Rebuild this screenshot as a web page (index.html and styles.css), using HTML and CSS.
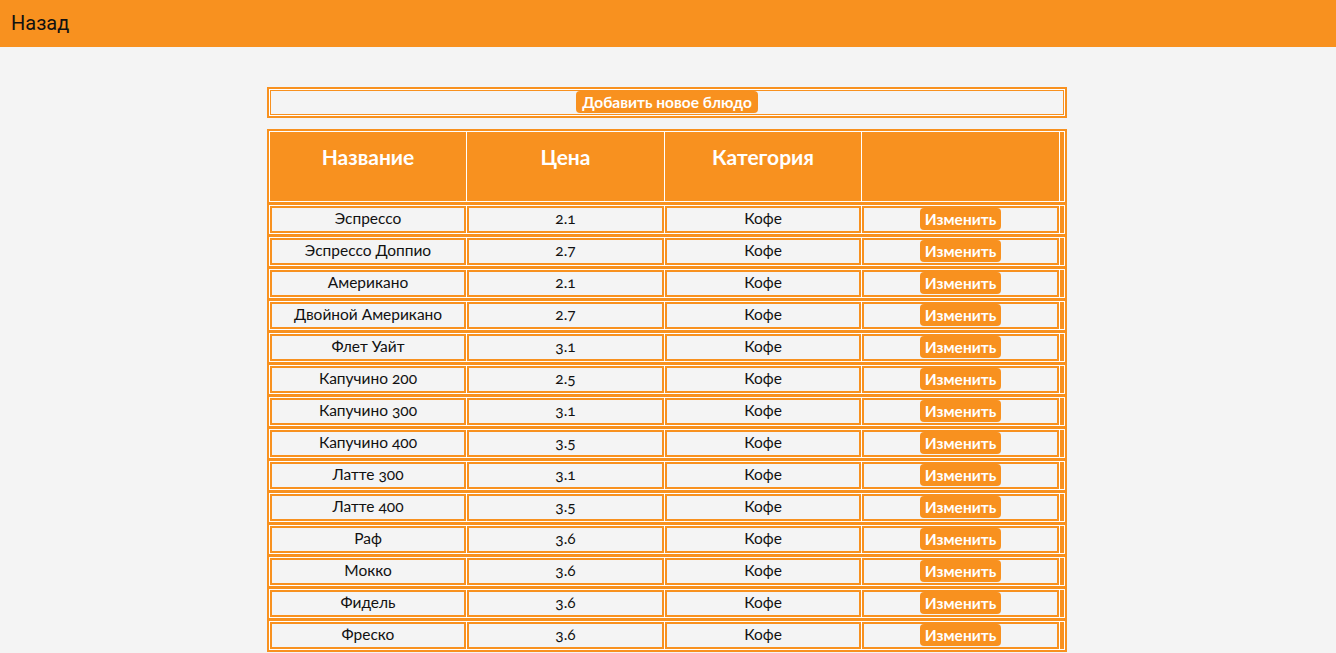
FILE: index.html
```html
<!DOCTYPE html>
<html lang="ru">
<head>
<meta charset="utf-8">
<title>Меню</title>
<link rel="stylesheet" href="styles.css">
</head>
<body>
<header class="topbar"><a class="back">Назад</a></header>
<main class="content">
  <div class="addbox">
    <div class="addcell"><button class="btn btn-add">Добавить новое блюдо</button></div>
  </div>
  <div class="table">
    <div class="row head">
      <div class="cell">Название</div>
      <div class="cell">Цена</div>
      <div class="cell">Категория</div>
      <div class="cell"></div>
      <div class="cell tail"></div>
    </div>
    <div class="row"><div class="cell">Эспрессо</div><div class="cell">2.1</div><div class="cell">Кофе</div><div class="cell"><button class="btn">Изменить</button></div><div class="cell tail"></div></div>
    <div class="row"><div class="cell">Эспрессо Доппио</div><div class="cell">2.7</div><div class="cell">Кофе</div><div class="cell"><button class="btn">Изменить</button></div><div class="cell tail"></div></div>
    <div class="row"><div class="cell">Американо</div><div class="cell">2.1</div><div class="cell">Кофе</div><div class="cell"><button class="btn">Изменить</button></div><div class="cell tail"></div></div>
    <div class="row"><div class="cell">Двойной Американо</div><div class="cell">2.7</div><div class="cell">Кофе</div><div class="cell"><button class="btn">Изменить</button></div><div class="cell tail"></div></div>
    <div class="row"><div class="cell">Флет Уайт</div><div class="cell">3.1</div><div class="cell">Кофе</div><div class="cell"><button class="btn">Изменить</button></div><div class="cell tail"></div></div>
    <div class="row"><div class="cell">Капучино 200</div><div class="cell">2.5</div><div class="cell">Кофе</div><div class="cell"><button class="btn">Изменить</button></div><div class="cell tail"></div></div>
    <div class="row"><div class="cell">Капучино 300</div><div class="cell">3.1</div><div class="cell">Кофе</div><div class="cell"><button class="btn">Изменить</button></div><div class="cell tail"></div></div>
    <div class="row"><div class="cell">Капучино 400</div><div class="cell">3.5</div><div class="cell">Кофе</div><div class="cell"><button class="btn">Изменить</button></div><div class="cell tail"></div></div>
    <div class="row"><div class="cell">Латте 300</div><div class="cell">3.1</div><div class="cell">Кофе</div><div class="cell"><button class="btn">Изменить</button></div><div class="cell tail"></div></div>
    <div class="row"><div class="cell">Латте 400</div><div class="cell">3.5</div><div class="cell">Кофе</div><div class="cell"><button class="btn">Изменить</button></div><div class="cell tail"></div></div>
    <div class="row"><div class="cell">Раф</div><div class="cell">3.6</div><div class="cell">Кофе</div><div class="cell"><button class="btn">Изменить</button></div><div class="cell tail"></div></div>
    <div class="row"><div class="cell">Мокко</div><div class="cell">3.6</div><div class="cell">Кофе</div><div class="cell"><button class="btn">Изменить</button></div><div class="cell tail"></div></div>
    <div class="row"><div class="cell">Фидель</div><div class="cell">3.6</div><div class="cell">Кофе</div><div class="cell"><button class="btn">Изменить</button></div><div class="cell tail"></div></div>
    <div class="row"><div class="cell">Фреско</div><div class="cell">3.6</div><div class="cell">Кофе</div><div class="cell"><button class="btn">Изменить</button></div><div class="cell tail"></div></div>
  </div>
</main>
</body>
</html>
```
FILE: styles.css
```css
* { box-sizing: border-box; }
html, body { margin: 0; padding: 0; }
body {
  background: #f4f4f4;
  font-family: Lato, "Open Sans", "DejaVu Sans", sans-serif;
  color: #111;
}
.topbar {
  height: 47px;
  background: #f8911f;
  display: flex;
  align-items: center;
  padding: 0 0 2px 11px;
}
.back {
  font-family: Roboto, "Open Sans", sans-serif;
  font-size: 20px;
  color: #111;
}
.content { padding-bottom: 20px; }
.addbox {
  width: 800px;
  margin: 40px 0 0 calc(50% - 401px);
  border: 2px solid #f8911f;
  padding: 1px;
  background: #fff;
}
.addcell {
  border: 1px solid #f8911f;
  background: #f4f4f4;
  height: 25px;
  display: flex;
  justify-content: center;
  align-items: flex-start;
}
.btn {
  font-family: inherit;
  background: #f8911f;
  color: #fff;
  border: none;
  border-radius: 4px;
  font-weight: 700;
  font-size: 15.5px;
  height: 22px;
  line-height: 22px;
  padding: 0 5px;
  vertical-align: top;
  margin-top: 0;
}
.btn-add { font-size: 15.5px; padding: 0 6px; }
.table {
  width: 800px;
  margin: 11px 0 0 calc(50% - 401px);
  border: 2px solid #f8911f;
  background: #f8911f;
  display: flex;
  flex-direction: column;
  gap: 3px;
}
.row {
  display: grid;
  grid-template-columns: 196px 197px 196px 197px auto;
  gap: 1px;
  padding: 1px;
  background: #fff;
}
.cell {
  border: 2px solid #f8911f;
  background: #f4f4f4;
  text-align: center;
  font-size: 15.5px;
  height: 27px;
  line-height: 21px;
  font-feature-settings: "onum";
}
.cell.tail { width: 4px; }
.head .cell {
  background: #f8911f;
  color: #fff;
  font-weight: 700;
  font-size: 21px;
  height: 69px;
  line-height: 24px;
  padding: 11px 0 30px;
}
```
